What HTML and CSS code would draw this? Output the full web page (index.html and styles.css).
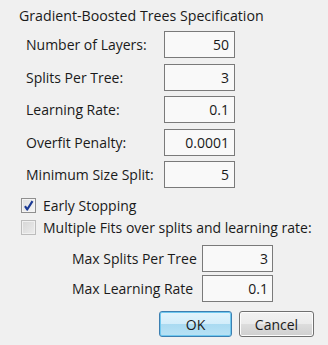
FILE: index.html
```html
<!DOCTYPE html>
<html>
<head>
<meta charset="utf-8">
<link rel="stylesheet" href="styles.css">
</head>
<body>
<div class="dialog">
  <div class="title">Gradient-Boosted Trees Specification</div>
  <div class="fields">
    <label class="lbl">Number of Layers:</label><div class="box">50</div>
    <label class="lbl">Splits Per Tree:</label><div class="box">3</div>
    <label class="lbl">Learning Rate:</label><div class="box">0.1</div>
    <label class="lbl">Overfit Penalty:</label><div class="box">0.0001</div>
    <label class="lbl">Minimum Size Split:</label><div class="box">5</div>
  </div>
  <div class="checks">
    <div class="check"><span class="cb checked"><svg width="13" height="13" viewBox="0 0 13 13"><path d="M3 7.2 L5.2 10.5 L10.5 2.2" fill="none" stroke="#1b3a94" stroke-width="2.2" stroke-linejoin="round"/></svg></span><span>Early Stopping</span></div>
    <div class="check"><span class="cb disabled"></span><span>Multiple Fits over splits and learning rate:</span></div>
  </div>
  <div class="subfields">
    <label class="lbl">Max Splits Per Tree</label><div class="box sub">3</div>
    <label class="lbl">Max Learning Rate</label><div class="box sub">0.1</div>
  </div>
  <div class="buttons">
    <button class="btn ok">OK</button>
    <button class="btn cancel">Cancel</button>
  </div>
</div>
</body>
</html>
```
FILE: styles.css
```css
html, body {
  margin: 0;
  padding: 0;
  background: #f0f0f0;
}
body {
  width: 328px;
  height: 345px;
  overflow: hidden;
  font-family: "Open Sans", "Noto Sans", sans-serif;
  font-size: 14px;
  color: #1a1a1a;
}
.dialog {
  display: flex;
  flex-direction: column;
}
.title {
  padding: 6px 0 0 19px;
  height: 25px;
  line-height: 20px;
  font-size: 14.2px;
  white-space: nowrap;
}
.fields {
  display: grid;
  grid-template-columns: 138px 71px;
  grid-auto-rows: 27px;
  row-gap: 5.5px;
  padding-left: 26px;
}
.lbl {
  display: flex;
  align-items: center;
  white-space: nowrap;
}
.box {
  box-sizing: border-box;
  height: 27px;
  border: 1px solid #7a7a7a;
  background: #f9f9f9;
  text-align: right;
  padding-right: 5px;
  line-height: 25px;
}
.box.sub {
  padding-right: 4px;
}
.checks {
  display: flex;
  flex-direction: column;
  gap: 7px;
  padding: 10px 0 0 21px;
}
.check {
  display: flex;
  align-items: center;
  gap: 7px;
  height: 15px;
  white-space: nowrap;
}
.cb {
  box-sizing: border-box;
  width: 15px;
  height: 15px;
  border: 1px solid #8f8f8f;
  display: flex;
  align-items: center;
  justify-content: center;
}
.cb.checked {
  background: linear-gradient(135deg, #dedede, #f6f6f6);
  box-shadow: inset 0 0 0 1px #f4f4f4;
}
.cb.disabled {
  border-color: #bcbcbc;
  background: linear-gradient(135deg, #d6d6d6, #ececec);
  box-shadow: inset 0 0 0 1px #f0f0f0;
}
.subfields {
  display: grid;
  grid-template-columns: 130px 71px;
  grid-auto-rows: 27px;
  row-gap: 3px;
  padding: 10px 0 0 72px;
}
.buttons {
  display: flex;
  justify-content: flex-end;
  gap: 7px;
  padding: 9px 14px 0 0;
}
.btn {
  box-sizing: border-box;
  height: 26px;
  border-radius: 3px;
  font-family: inherit;
  font-size: 14px;
  color: #1a1a1a;
  padding: 0;
}
.ok {
  width: 73px;
  border: 1px solid #3c7fb1;
  background: linear-gradient(#e3f4fc 0%, #d2edfa 50%, #a9daf1 50%, #b8e2f5 100%);
  box-shadow: inset 0 0 0 1px #6fc8ef;
}
.cancel {
  width: 75px;
  border: 1px solid #707070;
  background: linear-gradient(#f2f2f2 0%, #ebebeb 50%, #dddddd 50%, #cfcfcf 100%);
  box-shadow: inset 0 0 0 1px #fcfcfc;
}
```
